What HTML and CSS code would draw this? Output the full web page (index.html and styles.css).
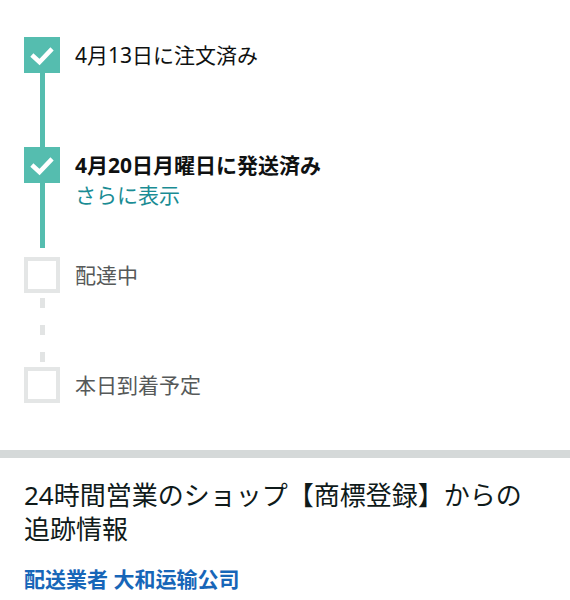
FILE: index.html
```html
<!DOCTYPE html>
<html>
<head>
  <title>配送状況</title>
  <link rel="stylesheet" href="styles.css">
</head>
<body>
  <div class="tracker">
    <div class="step done">
      <div class="marker">
        <div class="box">
          <svg viewBox="0 0 36 36" width="36" height="36"><path d="M9.5 19.5 L15.5 25 L26.5 13.5" fill="none" stroke="#fff" stroke-width="4.5" stroke-linecap="square"/></svg>
        </div>
        <div class="connector solid"></div>
      </div>
      <div class="step-text">
        <div class="label">4月13日に注文済み</div>
      </div>
    </div>

    <div class="step done">
      <div class="marker">
        <div class="box">
          <svg viewBox="0 0 36 36" width="36" height="36"><path d="M9.5 19.5 L15.5 25 L26.5 13.5" fill="none" stroke="#fff" stroke-width="4.5" stroke-linecap="square"/></svg>
        </div>
        <div class="connector solid short"></div>
      </div>
      <div class="step-text">
        <div class="label current">4月20日月曜日に発送済み</div>
        <a class="more" href="#">さらに表示</a>
      </div>
    </div>

    <div class="step">
      <div class="marker">
        <div class="box"></div>
        <div class="connector dashed"></div>
      </div>
      <div class="step-text">
        <div class="label pending">配達中</div>
      </div>
    </div>

    <div class="step last">
      <div class="marker">
        <div class="box"></div>
      </div>
      <div class="step-text">
        <div class="label pending">本日到着予定</div>
      </div>
    </div>
  </div>

  <div class="divider"></div>

  <div class="tracking-info">
    <h2>24時間営業のショップ【商標登録】からの追跡情報</h2>
    <a class="carrier" href="#">配送業者 大和运输公司</a>
  </div>
</body>
</html>
```

FILE: styles.css
```css
* {
  margin: 0;
  padding: 0;
  box-sizing: border-box;
}

html, body {
  width: 100%;
  height: 100%;
}

body {
  font-family: "Noto Sans", "Noto Sans CJK JP", sans-serif;
  background-color: #ffffff;
  color: #0f1111;
  font-size: 21px;
  line-height: 30px;
}

a {
  text-decoration: none;
}

/* Progress tracker */
.tracker {
  padding: 37px 24px 47px 24px;
}

.step {
  display: flex;
  gap: 15px;
  min-height: 110px;
}

.step.last {
  min-height: 0;
}

.marker {
  width: 36px;
  display: flex;
  flex-direction: column;
  align-items: center;
  flex-shrink: 0;
}

.box {
  width: 36px;
  height: 36px;
  border: 4px solid #e4e6e6;
  background: #ffffff;
}

.box svg {
  display: block;
}

.step.done .box {
  border: none;
  background: #55bdaf;
}

.connector {
  flex: 1;
  width: 5px;
}

.connector.solid {
  background: #55bdaf;
}

.connector.short {
  margin-bottom: 9px;
}

.connector.dashed {
  background: repeating-linear-gradient(to bottom,
    transparent 0, transparent 5px,
    #e2e4e4 5px, #e2e4e4 15px,
    transparent 15px, transparent 27px);
}

.step-text {
  padding-top: 3px;
}

.label.current {
  font-weight: 700;
}

.label.pending {
  color: #565959;
}

.more {
  color: #1a8c94;
}

/* Tracking info */
.divider {
  height: 8px;
  background: #d5d9d9;
}

.tracking-info {
  padding: 20px 24px 0 24px;
}

.tracking-info h2 {
  font-size: 26px;
  font-weight: 400;
  line-height: 34px;
  color: #0f1a1a;
}

.carrier {
  display: block;
  margin-top: 18px;
  color: #1766b8;
  font-weight: 700;
}
```
